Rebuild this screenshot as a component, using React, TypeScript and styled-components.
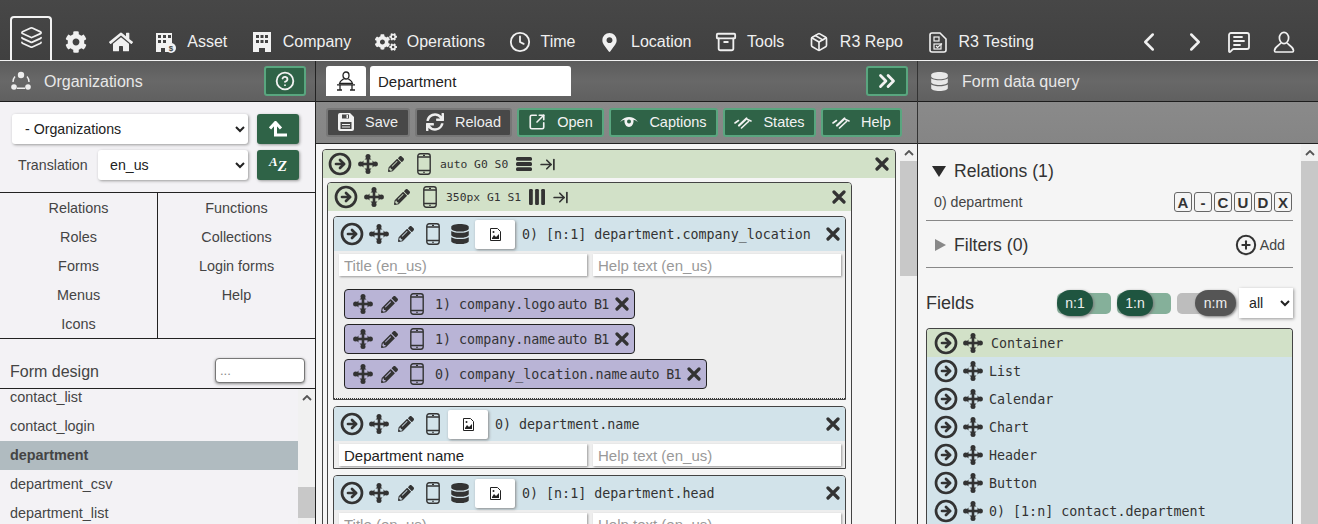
import React from "react";
import styled, { createGlobalStyle } from "styled-components";
import { FaCog, FaCogs, FaHome, FaMapMarkerAlt, FaDatabase, FaPencilAlt, FaSync } from "react-icons/fa";
import { Layers, Clock, Archive, Package, ChevronLeft, ChevronRight, MessageSquareText, CircleHelp, ChevronsRight, SquareArrowOutUpRight, CircleArrowRight, ArrowRightToLine, CirclePlus } from "lucide-react";

const Global = createGlobalStyle`
  html, body { margin: 0; padding: 0; background: #f5f5f5; }
  body { font-family: "Liberation Sans", Arial, sans-serif; color: #333; }
  * { box-sizing: border-box; }
  input, select { font-family: "Liberation Sans", Arial, sans-serif; }
`;

const Page = styled.div`
  width: 1318px; height: 524px; overflow: hidden; display: flex; flex-direction: column;
`;
const Nav = styled.header`
  height: 61px; flex: none; display: flex; padding-left: 10px; color: #f0f0f0;
  background: linear-gradient(#474747, #404040); border-bottom: 1px solid #f2f2f2;
`;
const ActiveTab = styled.div`
  width: 42px; height: 44px; margin-top: 16px; margin-right: 1px; border: 2px solid #f2f2f2; border-bottom: 0;
  border-radius: 4px 4px 0 0; display: flex; justify-content: center; padding-top: 8px;
`;
const NavItem = styled.div`
  display: flex; align-items: center; gap: 9px; padding: 24px 11.25px 0; font-size: 16px; height: 60px;
`;
const NavIconItem = styled(NavItem)`padding-left: 10.5px; padding-right: 10.5px;`;
const NavIconBox = styled.span`
  width: 24px; height: 24px; display: flex; align-items: center; justify-content: center;
`;
const NavSpacer = styled.div`flex: 1;`;
const NavRight = styled.div`
  display: flex; align-items: center; padding: 24px 23px 0 0; gap: 16px;
`;
const CommentSlot = styled.span`display: flex; margin-left: 1px;`;
const UserSlot = styled.span`display: flex; margin-left: 6px;`;
const Main = styled.div`flex: 1; display: flex; min-height: 0;`;
const LeftCol = styled.aside`
  width: 316px; flex: none; display: flex; flex-direction: column; background: #f3f2f5; border-right: 1px solid #222;
`;
const MidCol = styled.section`
  width: 602px; flex: none; display: flex; flex-direction: column; border-right: 1px solid #333;
`;
const RightCol = styled.aside`
  flex: 1; display: flex; flex-direction: column; min-width: 0;
`;
const PanelHead = styled.div`
  height: 41px; flex: none; display: flex; align-items: center; background: linear-gradient(#5c5c5c, #686868 50%, #606060);
  border-bottom: 1px solid #1c1c1c; color: #e8e8e8; font-size: 16px;
`;
const HeadText = styled.span`padding-top: 1px;`;
const OrgHead = styled(PanelHead)`padding: 0 9px 0 11px; gap: 13px;`;
const FormHead = styled(PanelHead)`padding: 0 9px 0 10px; gap: 4px;`;
const QueryHead = styled(PanelHead)`padding: 0 0 0 12px; gap: 13px;`;
const Grow = styled.div`flex: 1;`;
const GreenBtn = styled.div`
  display: flex; align-items: center; justify-content: center; color: #f2f2f2; background: #2f6347;
  border: 2px solid #59a67f; border-radius: 3px; gap: 11px; height: 30px; font-size: 14.5px;
`;
const HeadBtn = styled(GreenBtn)`width: 42px;`;
const PersonTab = styled.div`
  width: 40px; height: 30px; background: #fff; display: flex; align-items: center; justify-content: center; border-radius: 3px 3px 0 0;
`;
const TitleBox = styled.div`
  width: 201px; height: 30px; background: #fff; color: #222; font-size: 15px; display: flex; align-items: center; padding-left: 8px; border-radius: 3px 3px 0 0;
`;
const LeftTop = styled.div`
  padding: 12px 16px 0 12px; display: flex; flex-direction: column; gap: 6px; border-bottom: 1px solid #222; height: 91px; flex: none;
`;
const FormRow = styled.div`display: flex; align-items: center; gap: 9px;`;
const TransLabel = styled.span`font-size: 14.2px; width: 77px; padding-left: 6px; color: #444; white-space: nowrap;`;
const Select = styled.select<{ $pad?: number }>`
  height: 30px; border: 0; background: #fff; font-size: 14.2px; color: #222; border-radius: 3px; padding-left: ${p => p.$pad ?? 8}px; flex: 1; min-width: 0;
  box-shadow: 1px 1px 3px #999; outline: none;
`;
const SideBtn = styled.div`
  width: 42px; height: 30px; flex: none; background: #2f6347; border-radius: 3px; color: #fff; display: flex; align-items: center; justify-content: center;
  box-shadow: 1px 1px 3px #999; font-family: "Liberation Serif", serif; font-style: italic; font-weight: bold;
`;
const AzA = styled.span`font-size: 13px; margin-bottom: 6px;`;
const AzZ = styled.span`font-size: 15px; margin-top: 3px;`;
const NavGrid = styled.div`
  display: grid; grid-template-columns: 157px 1fr; height: 146px; border-bottom: 1px solid #222; flex: none;
`;
const NavColumn = styled.div`
  & + & { border-left: 1px solid #222; }
`;
const NavLink = styled.div`
  height: 29px; line-height: 31px; text-align: center; font-size: 14.4px; color: #444;
`;
const DesignHead = styled.div`
  height: 50px; flex: none; display: flex; align-items: flex-end; justify-content: space-between; padding: 0 10px 5px 10px; border-bottom: 1px solid #222;
`;
const DesignTitle = styled.span`font-size: 16px; color: #444; line-height: 26px; margin-bottom: -2px;`;
const FilterInput = styled.input`
  width: 90px; height: 25px; border: 1px solid #777; border-radius: 4px; background: #fff; font-size: 13px; padding: 0 4px; box-shadow: 0 1px 3px #888; outline: none;
  &::placeholder { color: #888; }
`;
const ListWrap = styled.div`flex: 1; display: flex; min-height: 0; overflow: hidden;`;
const FormList = styled.div`flex: 1; margin-top: -6.5px; `;
const FormItem = styled.div<{ $active?: boolean }>`
  height: 29px; line-height: 29px; padding-left: 10px; font-size: 14.4px; color: #444;
  background: ${p => (p.$active ? "#b0bbc0" : "transparent")};
  font-weight: ${p => (p.$active ? "bold" : "normal")};
`;
const Track = styled.div`
  width: 17px; flex: none; background: #f1f1f1; display: flex; flex-direction: column; align-items: center;
`;
const TrackArrow = styled.div`
  height: 17px; width: 100%; display: flex; align-items: center; justify-content: center; flex: none;
`;
const Thumb = styled.div<{ $top: number; $h: number }>`
  width: 100%; background: #c8c8c8; flex: none; margin-top: ${p => p.$top}px; height: ${p => p.$h}px;
`;
const ToolBar = styled.div`
  height: 42px; flex: none; background: linear-gradient(#8a8a8a, #858585); border-bottom: 1px solid #222; display: flex; align-items: center; gap: 5px; padding: 0 0 1px 10px;
`;
const DarkBtn = styled.div<{ $w: number }>`
  width: ${p => p.$w}px; height: 29px; display: flex; align-items: center; justify-content: center; gap: 11px; background: #484848; color: #eee;
  border: 2px solid #777; border-radius: 3px; font-size: 14.5px;
`;
const ToolGreen = styled(GreenBtn)<{ $w: number }>`width: ${p => p.$w}px; height: 29px;`;
const Body = styled.div`flex: 1; display: flex; min-height: 0; background: #f5f5f5;`;
const DesignArea = styled.div`flex: 1; padding: 5px 4px 0 6px; min-width: 0; overflow: hidden;`;
const Box = styled.div`
  border: 1px solid #444; border-radius: 4px 4px 0 0; background: #f5f5f5; overflow: hidden;
`;
const FixedBox = styled(Box)`width: 525px; margin: 4px 0 0 4px; padding-bottom: 6px;`;
const Head = styled.div<{ $bg: string; $h: number; $pl?: number; $pr?: number }>`
  height: ${p => p.$h}px; background: ${p => p.$bg}; display: flex; align-items: center; padding: 0 ${p => p.$pr ?? 5}px 0 ${p => p.$pl ?? 4}px;
`;
const Slot = styled.span<{ $w: number; $ml?: number }>`
  width: ${p => p.$w}px; flex: none; display: flex; align-items: center; justify-content: center; color: #333; margin-left: ${p => p.$ml ?? 0}px;
`;
const SmallMono = styled.span`
  font-family: "DejaVu Sans Mono", monospace; font-size: 11.33px; color: #333; margin: 0 8px 0 2px; white-space: nowrap;
`;
const Mono = styled.span<{ $ml?: number }>`
  font-family: "DejaVu Sans Mono", monospace; font-size: 13.33px; color: #333; white-space: nowrap; margin-left: ${p => p.$ml ?? 0}px;
`;
const Close = styled.span`
  margin-left: auto; display: flex; color: #333;
`;
const FieldBox = styled(Box)`margin: 5px 5px 0; background: #eee; & + & { margin-top: 6px; }`;
const ImgBtn = styled.div`
  width: 40px; height: 29px; background: #fff; border-radius: 2px; box-shadow: 1px 1px 3px #888; display: flex; align-items: center; justify-content: center; margin: 0 7px 0 2px; flex: none;
`;
const Inputs = styled.div`display: flex; gap: 6px; padding: 3px 4px 2px 5px;`;
const TextInput = styled.input`
  width: 248px; height: 22px; border: 0; background: #fff; padding: 0 5px; font-size: 15px; color: #222; box-shadow: 1px 1px 2px #999; outline: none;
  &::placeholder { color: #999; }
`;
const SubList = styled.div`
  padding: 11px 10px 9px; display: flex; flex-direction: column; gap: 5px; align-items: flex-start; border-bottom: 1px dotted #333;
`;
const SubItem = styled.div`
  height: 30px; display: flex; align-items: center; background: #b9b4d6; border: 1px solid #222; border-radius: 4px; padding: 0 5px 0 4px;
`;
const SubText = styled.span`
  font-family: "DejaVu Sans Mono", monospace; font-size: 13.33px; color: #333; margin: 0 2px 0 5px; white-space: nowrap; 
`;
const SubTight = styled.span`
  font-family: "DejaVu Sans Mono", monospace; font-size: 13.33px; letter-spacing: -.7px; color: #333; margin-right: 6px; white-space: nowrap;
`;
const QueryBar = styled.div`height: 42px; flex: none; background: linear-gradient(#8a8a8a, #858585); border-bottom: 1px solid #222;`;
const QueryArea = styled.div`flex: 1; padding: 0 8px 0 8px; min-width: 0; overflow: hidden;`;
const SectionHead = styled.div`
  display: flex; align-items: center; font-size: 17.6px; color: #333; height: 22px; gap: 8px; padding-left: 6px;
`;
const RelationsHead = styled(SectionHead)`margin-top: 16px;`;
const Triangle = styled.span<{ $down?: boolean }>`
  display: block; width: 0; height: 0;
  ${p => p.$down
    ? "border-left: 7.5px solid transparent; border-right: 7.5px solid transparent; border-top: 11px solid #2c2c2c;"
    : "border-top: 6.5px solid transparent; border-bottom: 6.5px solid transparent; border-left: 11px solid #888;"}
`;
const RelRow = styled.div`
  display: flex; align-items: center; justify-content: space-between; padding: 10px 1px 8px 8px; border-bottom: 1px solid #888; font-size: 14.2px; color: #444;
`;
const Perms = styled.div`display: flex; gap: 2px;`;
const Perm = styled.span`
  width: 18px; height: 20px; border: 1px solid #666; border-radius: 3px; font-weight: bold; font-size: 15px; display: flex; align-items: center; justify-content: center; color: #333;
`;
const FilterRow = styled(SectionHead)`
  height: 47px; border-bottom: 1px solid #888; padding: 2px 8px 0 9px; gap: 8px;
`;
const AddLabel = styled.span`
  margin-left: auto; display: flex; align-items: center; gap: 3px; font-size: 14.2px; color: #444;
`;
const FieldsRow = styled.div`
  display: flex; align-items: center; height: 60px; padding-top: 10px; font-size: 18px; color: #333;
`;
const FieldsLabel = styled.span`flex: 1;`;
const Toggle = styled.div<{ $on?: boolean; $w: number; $mr?: number }>`
  position: relative; width: ${p => p.$w}px; height: 21px; border-radius: 5px; background: ${p => (p.$on ? "#85b09a" : "#bdbdbd")}; margin-right: ${p => p.$mr ?? 6}px; flex: none;
`;
const Knob = styled.span<{ $on?: boolean; $w: number }>`
  position: absolute; top: -3px; ${p => (p.$on ? "left: 0;" : "right: -18px;")} width: ${p => p.$w}px; height: 26px; border-radius: 13px;
  background: ${p => (p.$on ? "#1f5540" : "#555")}; color: #eee; font-size: 14px; display: flex; align-items: center; justify-content: center; box-shadow: 1px 1px 3px #777;
`;
const SmallSelect = styled(Select)`
  flex: none; width: 54px; margin-left: 3px; padding-left: 6px; border-radius: 0;
`;
const FieldList = styled.div`
  border: 1px solid #444; border-bottom: 0; border-radius: 4px 4px 0 0; overflow: hidden;
`;
const FieldRow = styled.div<{ $green?: boolean }>`
  height: 28px; display: flex; align-items: center; background: ${p => (p.$green ? "#d2e1c8" : "#d2e3ea")}; padding-left: 5px;
`;

const Move = ({ s = 20 }: { s?: number }) => (
  <svg width={s} height={s} viewBox="0 0 20 20" fill="#333">
    <rect x="1" y="8.7" width="18" height="2.6" />
    <rect x="8.7" y="1" width="2.6" height="18" />
    <circle cx="2.6" cy="10" r="2.5" /><circle cx="17.4" cy="10" r="2.5" />
    <circle cx="10" cy="2.6" r="2.5" /><circle cx="10" cy="17.4" r="2.5" />
    <path d="M5.5 6.500 2 10 5.500 13.500zM14.500 6.500 18 10 14.500 13.500zM6.500 5.500 10 2 13.500 5.500zM6.500 14.500 10 18 13.500 14.500z" />
  </svg>
);
const Phone = ({ h = 22 }: { h?: number }) => (
  <svg width={(h * 14) / 22} height={h} viewBox="0 0 14 22" fill="none" stroke="#333" strokeWidth="1.4">
    <rect x=".8" y=".8" width="12.4" height="20.4" rx="2.4" />
    <path d="M1 4h12M1 17.500h12M6 2.400h2M6.300 19.400h1.400" />
  </svg>
);
const X = ({ s = 14 }: { s?: number }) => (
  <svg width={s} height={s} viewBox="0 0 14 14" stroke="#333" strokeWidth="3.2" strokeLinecap="round">
    <path d="M2 2l10 10M12 2 2 12" />
  </svg>
);
const Arrow = ({ s = 24 }: { s?: number }) => <CircleArrowRight size={s} strokeWidth={2.7} color="#333" />;
const Pen = ({ s = 16 }: { s?: number }) => <FaPencilAlt size={s} color="#333" />;
const BrokenImg = () => (
  <svg width="11" height="13" viewBox="0 0 11 13" fill="none" stroke="#222">
    <path d="M.5.5h7l3 3v9H.5z" />
    <path d="M2 10l2-3 2 2 3-3v5H2z" fill="#222" stroke="none" />
    <circle cx="3.500" cy="4" r="1" fill="#222" stroke="none" />
  </svg>
);
const Asset = () => (
  <svg width="22" height="22" viewBox="0 0 22 22" fill="#f2f2f2">
    <path fillRule="evenodd" d="M1 2h16v10a6 6 0 0 0-3.500 9H10v-4H6v4H1zM3 4v3h3V4zM8 4v3h3V4zM13 4v3h3V4zM3 9v3h3V9zM8 9v3h3V9z" />
    <circle cx="16" cy="17" r="5" />
    <text x="16" y="20" fontSize="8" fontWeight="bold" fill="#444" textAnchor="middle" fontFamily="Liberation Sans">$</text>
  </svg>
);
const Building = () => (
  <svg width="18" height="20" viewBox="0 0 18 20" fill="#f2f2f2">
    <path fillRule="evenodd" d="M0 0h18v20h-6v-4H6v4H0zM3 3v3h3V3zM7.500 3v3h3V3zM12 3v3h3V3zM3 8v3h3V8zM7.500 8v3h3V8zM12 8v3h3V8z" />
  </svg>
);
const TestDoc = () => (
  <svg width="18" height="21" viewBox="0 0 18 21" fill="none" stroke="#f2f2f2" strokeWidth="1.6">
    <path d="M3 1h8l6 6v11a2 2 0 0 1-2 2H3a2 2 0 0 1-2-2V3a2 2 0 0 1 2-2z" />
    <rect x="5" y="5" width="5" height="4" strokeWidth="1.2" />
    <rect x="5" y="12" width="7" height="5" strokeWidth="1.2" />
    <path d="M7 14l1.500 1.500L13 11.500" strokeWidth="1.2" />
  </svg>
);
const UserIcon = () => (
  <svg width="22" height="22" viewBox="0 0 22 22" fill="none" stroke="#f2f2f2" strokeWidth="1.7">
    <ellipse cx="11" cy="7" rx="4.600" ry="5.600" />
    <path d="M7.500 12c0 2-5.500 3-6 7.500 0 1 .5 1.500 1 1.500h17c.5 0 1-.5 1-1.500-.5-4.500-6-5.500-6-7.500" />
  </svg>
);
const OrgIcon = () => (
  <svg width="20" height="20" viewBox="0 0 20 20" fill="#eee" stroke="#eee">
    <path d="M4 5.500A8 8 0 0 0 2 11M16 5.500A8 8 0 0 1 18 11M6 17.200h8" fill="none" strokeWidth="1.4" />
    <circle cx="10" cy="4" r="3.200" stroke="none" />
    <circle cx="3" cy="16" r="2.800" stroke="none" />
    <circle cx="17" cy="16" r="2.800" stroke="none" />
  </svg>
);
const DeskPerson = () => (
  <svg width="20" height="20" viewBox="0 0 20 20" fill="none" stroke="#222" strokeWidth="1.3">
    <ellipse cx="10" cy="4.500" rx="3" ry="3.500" />
    <path d="M7.500 8c-1 1-3.500 1.500-4 4.500h13c-.5-3-3-3.500-4-4.500" />
    <path d="M1 13.800h18M1 19h5M14 19h5M4 14v5M16 14v5" />
  </svg>
);
const UpCorner = () => (
  <svg width="18" height="16" viewBox="0 0 18 16" fill="none" stroke="#fff" strokeWidth="3">
    <path d="M18 14H6.500V2" />
    <path d="M1 7.500 6.500 1.500 12 7.500" />
  </svg>
);
const SaveIcon = () => (
  <svg width="16" height="18" viewBox="0 0 16 18" fill="#f2f2f2">
    <path fillRule="evenodd" d="M2 0h10l4 4v12a2 2 0 0 1-2 2H2a2 2 0 0 1-2-2V2a2 2 0 0 1 2-2zM4 1.500v4h7v-4zM8.500 2h1.500v3H8.500zM2.500 9v7h11V9z" />
    <path d="M4 11h8v1H4zM4 13.500h8v1H4z" />
  </svg>
);
const EyeIcon = () => (
  <svg width="18" height="10" viewBox="0 0 18 10" fill="#f2f2f2">
    <path d="M0 5C3 1 6 0 9 0s6 1 9 5c-2.500-1.500-3.500-2-4.500-2.200C14 7.500 11.500 10 9 10S4 7.500 4.500 2.800C3.500 3 2.500 3.500 0 5z" />
    <circle cx="9" cy="4.500" r="2" fill="#2f6347" />
  </svg>
);
const SlashEye = () => (
  <svg width="18" height="13" viewBox="0 0 18 13" fill="none" stroke="#f2f2f2" strokeLinecap="round">
    <path d="M1 7 4.500 4.500M13.500 3.500 17 5" strokeWidth="1.600" />
    <path d="M5 9.500 12.500 2.500" strokeWidth="2.200" />
    <path d="M7.500 12 14.500 5.500" strokeWidth="1.600" />
  </svg>
);
const RowsIcon = () => (
  <svg width="16" height="16" viewBox="0 0 16 16" fill="#333"><rect y="1" width="16" height="3.800" rx="1.500" /><rect y="6.100" width="16" height="3.800" rx="1.500" /><rect y="11.200" width="16" height="3.800" rx="1.500" /></svg>
);
const ColsIcon = () => (
  <svg width="16" height="16" viewBox="0 0 16 16" fill="#333"><rect x="0" width="3.800" height="16" rx="1.200" /><rect x="6.100" width="3.800" height="16" rx="1.200" /><rect x="12.200" width="3.800" height="16" rx="1.200" /></svg>
);
const Caret = () => (
  <svg width="10" height="6" viewBox="0 0 10 6" fill="none" stroke="#555" strokeWidth="1.800"><path d="M1 5l4-4 4 4" /></svg>
);

const navItems: [string, React.ReactNode][] = [
  ["Asset", <Asset />],
  ["Company", <Building />],
  ["Operations", <FaCogs size={22} />],
  ["Time", <Clock size={22} strokeWidth={2} />],
  ["Location", <FaMapMarkerAlt size={19} />],
  ["Tools", <Archive size={22} strokeWidth={2} />],
  ["R3 Repo", <Package size={20} strokeWidth={2} />],
  ["R3 Testing", <TestDoc />],
];

const TextField = ({ value, ph }: { value?: string; ph: string }) => (
  <TextInput readOnly defaultValue={value} placeholder={ph} />
);

const Sub = ({ n, name, meta }: { n: string; name: string; meta: string }) => (
  <SubItem>
    <Slot $w={27}><Move /></Slot>
    <Slot $w={27}><Pen s={17} /></Slot>
    <Slot $w={27}><Phone /></Slot>
    <SubText>{n} {name}</SubText>
    <SubTight>{meta}</SubTight>
    <X />
  </SubItem>
);

const FieldHead = ({ db, text }: { db?: boolean; text: string }) => (
  <Head $bg="#d2e3ea" $h={34}>
    <Slot $w={27}><Arrow /></Slot>
    <Slot $w={27}><Move /></Slot>
    <Slot $w={27}><Pen /></Slot>
    <Slot $w={27}><Phone /></Slot>
    {db && <Slot $w={27}><FaDatabase size={20} color="#333" /></Slot>}
    <ImgBtn><BrokenImg /></ImgBtn>
    <Mono>{text}</Mono>
    <Close><X /></Close>
  </Head>
);

export default function App() {
  return (
    <Page>
      <Global />
      <Nav>
        <ActiveTab><Layers size={23} strokeWidth={1.8} /></ActiveTab>
        <NavIconItem><NavIconBox><FaCog size={22} /></NavIconBox></NavIconItem>
        <NavIconItem><NavIconBox><FaHome size={24} /></NavIconBox></NavIconItem>
        {navItems.map(([label, icon]) => (
          <NavItem key={label}><NavIconBox>{icon}</NavIconBox>{label}</NavItem>
        ))}
        <NavSpacer />
        <NavRight>
          <ChevronLeft size={30} strokeWidth={2} />
          <ChevronRight size={30} strokeWidth={2} />
          <CommentSlot><MessageSquareText size={24} strokeWidth={1.8} /></CommentSlot>
          <UserSlot><UserIcon /></UserSlot>
        </NavRight>
      </Nav>
      <Main>
        <LeftCol>
          <OrgHead>
            <OrgIcon />
            <HeadText>Organizations</HeadText>
            <Grow />
            <HeadBtn><CircleHelp size={20} strokeWidth={2.2} /></HeadBtn>
          </OrgHead>
          <LeftTop>
            <FormRow>
              <Select $pad={9} defaultValue="org"><option value="org">- Organizations</option></Select>
              <SideBtn><UpCorner /></SideBtn>
            </FormRow>
            <FormRow>
              <TransLabel>Translation</TransLabel>
              <Select defaultValue="en"><option value="en">en_us</option></Select>
              <SideBtn><AzA>A</AzA><AzZ>Z</AzZ></SideBtn>
            </FormRow>
          </LeftTop>
          <NavGrid>
            <NavColumn>
              {["Relations", "Roles", "Forms", "Menus", "Icons"].map(t => <NavLink key={t}>{t}</NavLink>)}
            </NavColumn>
            <NavColumn>
              {["Functions", "Collections", "Login forms", "Help"].map(t => <NavLink key={t}>{t}</NavLink>)}
            </NavColumn>
          </NavGrid>
          <DesignHead>
            <DesignTitle>Form design</DesignTitle>
            <FilterInput placeholder="..." />
          </DesignHead>
          <ListWrap>
            <FormList>
              <FormItem>contact_list</FormItem>
              <FormItem>contact_login</FormItem>
              <FormItem $active>department</FormItem>
              <FormItem>department_csv</FormItem>
              <FormItem>department_list</FormItem>
            </FormList>
            <Track>
              <TrackArrow><Caret /></TrackArrow>
              <Thumb $top={81} $h={31} />
            </Track>
          </ListWrap>
        </LeftCol>
        <MidCol>
          <FormHead>
            <PersonTab><DeskPerson /></PersonTab>
            <TitleBox>Department</TitleBox>
            <Grow />
            <HeadBtn><ChevronsRight size={26} strokeWidth={2.6} /></HeadBtn>
          </FormHead>
          <ToolBar>
            <DarkBtn $w={84}><SaveIcon />Save</DarkBtn>
            <DarkBtn $w={97}><FaSync size={18} />Reload</DarkBtn>
            <ToolGreen $w={87}><SquareArrowOutUpRight size={18} strokeWidth={2.2} />Open</ToolGreen>
            <ToolGreen $w={109}><EyeIcon />Captions</ToolGreen>
            <ToolGreen $w={93}><SlashEye />States</ToolGreen>
            <ToolGreen $w={81}><SlashEye />Help</ToolGreen>
          </ToolBar>
          <Body>
            <DesignArea>
              <Box>
                <Head $bg="#d2e1c8" $h={28} $pl={3} $pr={6}>
                  <Slot $w={28}><Arrow /></Slot>
                  <Slot $w={28}><Move /></Slot>
                  <Slot $w={28}><Pen /></Slot>
                  <Slot $w={28}><Phone /></Slot>
                  <SmallMono>auto G0 S0</SmallMono>
                  <RowsIcon />
                  <Slot $w={24} $ml={3}><ArrowRightToLine size={17} strokeWidth={2.4} /></Slot>
                  <Close><X /></Close>
                </Head>
                <FixedBox>
                  <Head $bg="#d2e1c8" $h={28}>
                    <Slot $w={28}><Arrow /></Slot>
                    <Slot $w={28}><Move /></Slot>
                    <Slot $w={28}><Pen /></Slot>
                    <Slot $w={28}><Phone /></Slot>
                    <SmallMono>350px G1 S1</SmallMono>
                    <ColsIcon />
                    <Slot $w={24} $ml={3}><ArrowRightToLine size={17} strokeWidth={2.4} /></Slot>
                    <Close><X /></Close>
                  </Head>
                  <FieldBox>
                    <FieldHead db text="0) [n:1] department.company_location" />
                    <Inputs>
                      <TextField ph="Title (en_us)" />
                      <TextField ph="Help text (en_us)" />
                    </Inputs>
                    <SubList>
                      <Sub n="1)" name="company.logo" meta="auto B1" />
                      <Sub n="1)" name="company.name" meta="auto B1" />
                      <Sub n="0)" name="company_location.name" meta="auto B1" />
                    </SubList>
                  </FieldBox>
                  <FieldBox>
                    <FieldHead text="0) department.name" />
                    <Inputs>
                      <TextField value="Department name" ph="Title (en_us)" />
                      <TextField ph="Help text (en_us)" />
                    </Inputs>
                  </FieldBox>
                  <FieldBox>
                    <FieldHead db text="0) [n:1] department.head" />
                    <Inputs>
                      <TextField ph="Title (en_us)" />
                      <TextField ph="Help text (en_us)" />
                    </Inputs>
                  </FieldBox>
                </FixedBox>
              </Box>
            </DesignArea>
            <Track>
              <TrackArrow><Caret /></TrackArrow>
              <Thumb $top={0} $h={115} />
            </Track>
          </Body>
        </MidCol>
        <RightCol>
          <QueryHead>
            <FaDatabase size={19} />
            <HeadText>Form data query</HeadText>
          </QueryHead>
          <QueryBar />
          <Body>
            <QueryArea>
              <RelationsHead><Triangle $down />Relations (1)</RelationsHead>
              <RelRow>
                <span>0) department</span>
                <Perms>
                  {["A", "-", "C", "U", "D", "X"].map(p => <Perm key={p}>{p}</Perm>)}
                </Perms>
              </RelRow>
              <FilterRow>
                <Triangle />Filters (0)
                <AddLabel><CirclePlus size={22} strokeWidth={2.2} color="#333" />Add</AddLabel>
              </FilterRow>
              <FieldsRow>
                <FieldsLabel>Fields</FieldsLabel>
                <Toggle $on $w={54}><Knob $on $w={36}>n:1</Knob></Toggle>
                <Toggle $on $w={54}><Knob $on $w={36}>1:n</Knob></Toggle>
                <Toggle $w={41} $mr={18}><Knob $w={41}>n:m</Knob></Toggle>
                <SmallSelect defaultValue="all"><option value="all">all</option></SmallSelect>
              </FieldsRow>
              <FieldList>
                {["Container", "List", "Calendar", "Chart", "Header", "Button", "0) [1:n] contact.department"].map((t, i) => (
                  <FieldRow key={t} $green={i === 0}>
                    <Slot $w={28}><Arrow /></Slot>
                    <Slot $w={26}><Move /></Slot>
                    <Mono $ml={i === 0 ? 5 : 3}>{t}</Mono>
                  </FieldRow>
                ))}
              </FieldList>
            </QueryArea>
            <Track>
              <TrackArrow><Caret /></TrackArrow>
              <Thumb $top={0} $h={364} />
            </Track>
          </Body>
        </RightCol>
      </Main>
    </Page>
  );
}
